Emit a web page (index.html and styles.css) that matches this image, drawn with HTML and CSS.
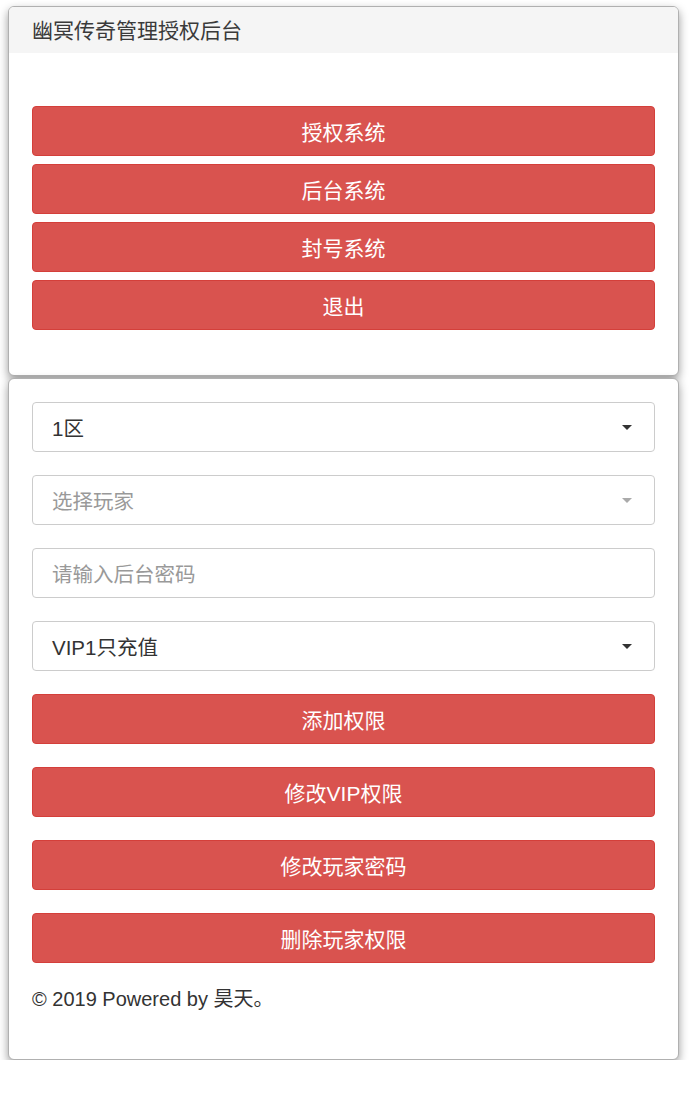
FILE: index.html
```html
<!DOCTYPE html>
<html lang="zh-CN">
<head>
  <meta charset="UTF-8">
  <title>幽冥传奇管理授权后台</title>
  <meta name="viewport" content="width=device-width, initial-scale=1.0">
  <link rel="stylesheet" href="styles.css">
</head>
<body>

  <div class="panel panel-menu">
    <div class="panel-heading">幽冥传奇管理授权后台</div>
    <div class="panel-body menu">
      <button class="btn">授权系统</button>
      <button class="btn">后台系统</button>
      <button class="btn">封号系统</button>
      <button class="btn">退出</button>
    </div>
  </div>

  <div class="panel panel-form">
    <div class="panel-body form">
      <div class="select">
        <span>1区</span>
        <i class="caret"></i>
      </div>
      <div class="select placeholder">
        <span>选择玩家</span>
        <i class="caret"></i>
      </div>
      <div class="input">
        <span>请输入后台密码</span>
      </div>
      <div class="select">
        <span>VIP1只充值</span>
        <i class="caret"></i>
      </div>
      <button class="btn">添加权限</button>
      <button class="btn">修改VIP权限</button>
      <button class="btn">修改玩家密码</button>
      <button class="btn">删除玩家权限</button>
      <p class="footer">© 2019 Powered by 昊天。</p>
    </div>
  </div>

</body>
</html>
```

FILE: styles.css
```css
body {
  margin: 0;
  padding: 6px 0 0 8px;
  font-family: "Liberation Sans", "Noto Sans CJK SC", sans-serif;
  font-size: 20px;
  color: #333;
  background: #fff;
}
.panel {
  width: 669px;
  background: #fff;
  border: 1px solid #b0b0b0;
  border-radius: 6px;
  box-shadow: 0 4px 10px rgba(0,0,0,0.4);
  overflow: hidden;
}
.panel-menu {
  height: 368px;
}
.panel-form {
  margin-top: 2px;
  height: 680px;
}
.panel-heading {
  background: #f5f5f5;
  height: 46px;
  line-height: 48px;
  padding: 0 23px;
  font-size: 21px;
  color: #3a3a3a;
}
.panel-body {
  display: flex;
  flex-direction: column;
  padding: 0 23px;
}
.menu {
  gap: 8px;
  padding-top: 53px;
}
.form {
  gap: 23px;
  padding-top: 23px;
}
.btn {
  height: 50px;
  background: #d9534f;
  border: 1px solid #d43f3a;
  border-radius: 4px;
  color: #fff;
  font-family: inherit;
  font-size: 21px;
  padding: 0;
}
.select,
.input {
  height: 48px;
  border: 1px solid #ccc;
  border-radius: 4px;
  display: flex;
  align-items: center;
  justify-content: space-between;
  padding: 0 22px 0 19px;
  font-size: 20.5px;
  color: #333;
}
.placeholder span,
.input span {
  color: #999;
}
.caret {
  width: 0;
  height: 0;
  border-left: 5px solid transparent;
  border-right: 5px solid transparent;
  border-top: 5px solid #333;
}
.placeholder .caret {
  border-top-color: #aaa;
}
.footer {
  margin: -1px 0 0 0;
  line-height: 28px;
  color: #333;
}
```
